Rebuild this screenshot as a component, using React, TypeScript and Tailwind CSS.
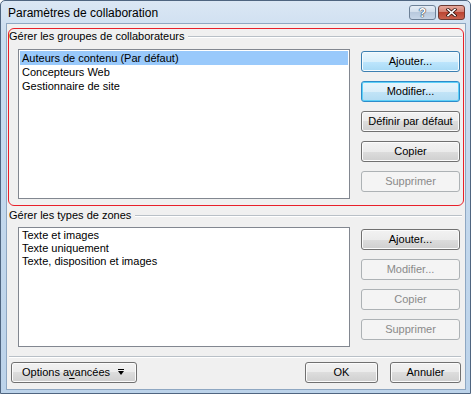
import React from 'react';

type Variant = 'normal' | 'hot' | 'focus' | 'disabled';

const variantClass: Record<Variant, string> = {
  normal:
    'border-[#707070] text-black bg-[linear-gradient(#f2f2f2,#ebebeb_50%,#dddddd_50%,#cfcfcf)] shadow-[inset_0_0_0_1px_#fbfbfb]',
  hot:
    'border-[#3c7fb1] text-black bg-[linear-gradient(#eaf6fd,#d9f0fc_50%,#bee6fd_50%,#a7d9f5)] shadow-[inset_0_0_0_1px_#f4fbfe]',
  focus:
    'border-[#2c8ccb] text-black bg-[linear-gradient(#e8f5fc,#dbeffa_50%,#c3e4f7_50%,#b2dcf3)] shadow-[inset_0_0_0_1px_#5ed0f7]',
  disabled: 'border-[#adb2b5] text-[#8a8a8a] bg-[#f4f4f4]',
};

const Btn = ({ label, variant = 'normal', className = '' }: { label: React.ReactNode; variant?: Variant; className?: string }) => (
  <div
    className={`h-[21px] rounded-[3px] border flex items-center justify-center whitespace-nowrap text-[11px] leading-none ${variantClass[variant]} ${className}`}
  >
    {label}
  </div>
);

const ListBox = ({ items, selected, rowH, className = '' }: { items: string[]; selected?: number; rowH: string; className?: string }) => (
  <div className={`w-[332px] border border-[#828790] bg-white pt-[1px] px-[1px] ${className}`}>
    {items.map((it, i) => (
      <div key={it} className={`${rowH} flex items-center pl-[2px] text-[11px] leading-none text-black ${i === selected ? 'bg-[#99c9fb]' : ''}`}>
        {it}
      </div>
    ))}
  </div>
);

const GroupLabel = ({ text, className = '' }: { text: string; className?: string }) => (
  <div className={`h-[15px] flex items-center ${className}`}>
    <span className="text-[11px] leading-none text-black whitespace-nowrap">{text}</span>
    <div className="flex-1 ml-[4px] h-[2px] border-t border-[#b9c0c7] border-b border-b-white" />
  </div>
);

export default function App() {
  return (
    <div className="w-[471px] h-[394px] flex flex-col border border-[#4f6580] rounded-t-[5px] bg-[linear-gradient(#dbe7f4,#c9dcef_40px,#bcd3ea)] font-['Liberation_Sans',Arial,sans-serif] overflow-hidden">
      {/* title bar */}
      <div className="h-[22px] flex items-start pl-[7px] pr-[5px] shrink-0">
        <span className="mt-[6px] text-[12px] leading-none text-black">Paramètres de collaboration</span>
        <div className="ml-auto mt-[4px] flex gap-[2px]">
          <div className="w-[27px] h-[15px] rounded-[3px] border border-[#6d8197] bg-[linear-gradient(#e6eef7,#cfdcea_50%,#b8c9dd_50%,#c6d6e8)] flex items-center justify-center">
            <span className="text-[12px] font-bold leading-none text-white [text-shadow:0_0_1px_#233449,0_0_1px_#233449,0_0_1px_#233449]">?</span>
          </div>
          <div className="w-[27px] h-[15px] rounded-[3px] border border-[#6b3a33] bg-[linear-gradient(#e6a99d,#d27b6b_50%,#bb4532_50%,#c9634f)] flex items-center justify-center">
            <svg width="11" height="9" viewBox="0 0 11 9">
              <path d="M2 1.5 L9 7.5 M9 1.5 L2 7.5" stroke="#3b1a14" strokeWidth="3.2" strokeLinecap="square" />
              <path d="M2 1.5 L9 7.5 M9 1.5 L2 7.5" stroke="#ffffff" strokeWidth="1.6" strokeLinecap="square" />
            </svg>
          </div>
        </div>
      </div>

      {/* client area */}
      <div className="flex-1 ml-[5px] mr-[4px] mb-[3px] border border-[#8ea7c2] bg-[#f0f0f0] flex flex-col">
        {/* highlighted group */}
        <div className="mt-[4px] ml-[1px] w-[456px] h-[178px] border border-[#e8202a] rounded-[6px] flex flex-col">
          <GroupLabel text="Gérer les groupes de collaborateurs" className="mr-[1px]" />
          <div className="flex">
            <ListBox
              className="mt-[5px] ml-[9px] h-[150px]"
              rowH="h-[14px]"
              selected={0}
              items={['Auteurs de contenu (Par défaut)', 'Concepteurs Web', 'Gestionnaire de site']}
            />
            <div className="ml-[11px] mt-[7px] w-[99px] flex flex-col gap-[9px]">
              <Btn label="Ajouter..." variant="hot" />
              <Btn label="Modifier..." variant="focus" />
              <Btn label="Définir par défaut" />
              <Btn label="Copier" />
              <Btn label="Supprimer" variant="disabled" />
            </div>
          </div>
        </div>

        {/* zone types group */}
        <GroupLabel text="Gérer les types de zones" className="mt-[2px] ml-[2px] mr-[3px]" />
        <div className="flex">
          <ListBox
            className="mt-[4px] ml-[11px] h-[120px]"
            rowH="h-[13px]"
            items={['Texte et images', 'Texte uniquement', 'Texte, disposition et images']}
          />
          <div className="ml-[11px] mt-[6px] w-[99px] flex flex-col gap-[9px]">
            <Btn label="Ajouter..." />
            <Btn label="Modifier..." variant="disabled" />
            <Btn label="Copier" variant="disabled" />
            <Btn label="Supprimer" variant="disabled" />
          </div>
        </div>

        <div className="mt-[9px] ml-[2px] mr-[4px] h-[2px] border-t border-[#b9c0c7] border-b border-b-white" />

        <div className="mt-[4px] flex">
          <Btn
            className="ml-[4px] w-[126px] !justify-start pl-[10px]"
            label={
              <>
                <span>
                  Options a<span className="underline underline-offset-2">v</span>ancées
                </span>
                <svg className="ml-[8px]" width="6" height="7" viewBox="0 0 6 7">
                  <rect x="0" y="0" width="6" height="1" fill="#000" />
                  <path d="M0 2 H6 L3 6 Z" fill="#000" />
                </svg>
              </>
            }
          />
          <Btn className="ml-auto w-[73px]" label="OK" />
          <Btn className="ml-[12px] mr-[4px] w-[71px]" label="Annuler" />
        </div>
      </div>
    </div>
  );
}
